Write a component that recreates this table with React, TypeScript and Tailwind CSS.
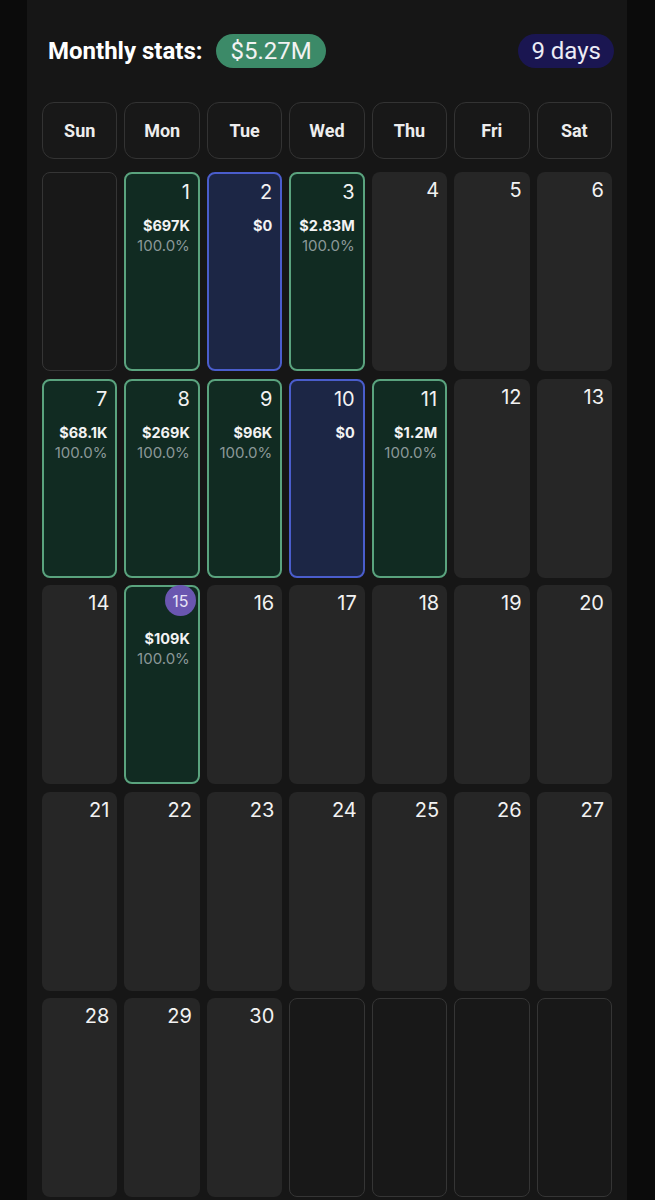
import React from "react";

type Day = { d: number; kind: "green" | "blue" | "plain"; amt?: string; pct?: string; today?: boolean };

const data: Record<number, Partial<Day>> = {
  1: { kind: "green", amt: "$697K", pct: "100.0%" },
  2: { kind: "blue", amt: "$0" },
  3: { kind: "green", amt: "$2.83M", pct: "100.0%" },
  7: { kind: "green", amt: "$68.1K", pct: "100.0%" },
  8: { kind: "green", amt: "$269K", pct: "100.0%" },
  9: { kind: "green", amt: "$96K", pct: "100.0%" },
  10: { kind: "blue", amt: "$0" },
  11: { kind: "green", amt: "$1.2M", pct: "100.0%" },
  15: { kind: "green", amt: "$109K", pct: "100.0%", today: true },
};

const weekdays = ["Sun", "Mon", "Tue", "Wed", "Thu", "Fri", "Sat"];

function Cell({ day }: { day: number | null }) {
  if (day === null) {
    return <div className="h-[199px] rounded-lg border-[1.5px] border-[#353535] bg-[#181818]" />;
  }
  const info = data[day] || { kind: "plain" };
  const kind = info.kind || "plain";
  const cls =
    kind === "green"
      ? "border-2 border-[#5aa37e] bg-[#112b22]"
      : kind === "blue"
      ? "border-2 border-[#4a5dcc] bg-[#1c2645]"
      : "bg-[#262626]";
  return (
    <div className={`relative h-[199px] rounded-lg ${cls} flex flex-col items-end pr-[8px] pt-[5px]`}>
      {info.today ? (
        <div className="absolute right-[2px] top-[-2px] flex h-[31px] w-[31px] items-center justify-center rounded-full bg-[#6a56b0] text-[16px] leading-none text-[#e8e4f7]">
          {day}
        </div>
      ) : null}
      <div className={`text-[20px] leading-[26px] text-[#f2f2f2] ${info.today ? "invisible" : ""}`}>{day}</div>
      {info.amt ? (
        <div className="mt-[12px] text-[14.5px] font-bold leading-[18px] text-[#f3f3f3]">{info.amt}</div>
      ) : null}
      {info.pct ? <div className="mt-[2px] text-[15px] leading-[18px] text-[#8b9898]">{info.pct}</div> : null}
    </div>
  );
}

export default function App() {
  const cells: (number | null)[] = [null];
  for (let i = 1; i <= 30; i++) cells.push(i);
  while (cells.length < 35) cells.push(null);
  return (
    <div className="min-h-[1200px] w-[655px] bg-[#0b0b0b]" style={{ fontFamily: "Inter, 'Noto Sans', sans-serif" }}>
      <div className="ml-[27px] min-h-[1200px] w-[600px] bg-[#161616] px-[15px] pt-[33px]">
        <div className="flex items-center justify-between pl-[6px]" style={{ fontFamily: "Roboto, sans-serif" }}>
          <div className="flex items-center gap-[14px]">
            <span className="text-[24px] font-bold text-white">Monthly stats:</span>
            <span className="flex h-[34px] items-center rounded-full bg-[#3c8a68] px-[14px] text-[24px] text-[#f2f2f2]">$5.27M</span>
          </div>
          <span className="-mr-[2px] flex h-[34px] items-center rounded-full bg-[#1a1651] px-[13px] text-[24px] text-[#ececf5]">9 days</span>
        </div>
        <div className="mt-[33px] grid grid-cols-7 gap-x-[7px]" style={{ fontFamily: "Roboto, sans-serif" }}>
          {weekdays.map((w) => (
            <div key={w} className="flex h-[57px] items-center justify-center rounded-xl border-[1.5px] border-[#333] bg-[#181818] text-[18px] font-bold text-[#ededed]">
              {w}
            </div>
          ))}
        </div>
        <div className="mt-[13px] grid grid-cols-7 gap-x-[7px] gap-y-[7.5px]">
          {cells.map((c, i) => (
            <Cell key={i} day={c} />
          ))}
        </div>
      </div>
    </div>
  );
}
